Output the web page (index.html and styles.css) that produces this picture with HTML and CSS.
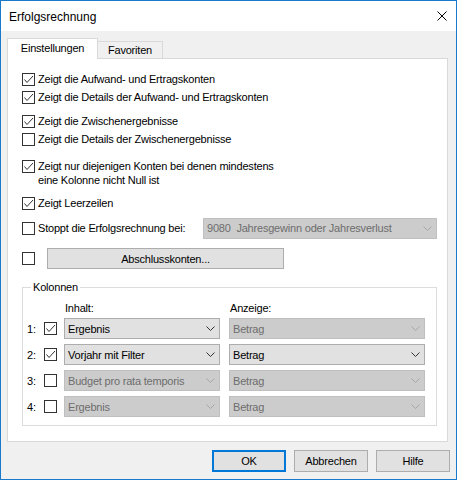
FILE: index.html
```html
<!DOCTYPE html>
<html lang="de">
<head>
<meta charset="utf-8">
<title>Erfolgsrechnung</title>
<link rel="stylesheet" href="styles.css">
</head>
<body>
<div class="window">
  <div class="titlebar">
    <span class="title">Erfolgsrechnung</span>
    <svg class="close" width="10" height="10" viewBox="0 0 10 10"><path d="M0.5 0.5 L9.5 9.5 M9.5 0.5 L0.5 9.5" stroke="#000" stroke-width="1" fill="none"/></svg>
  </div>
  <div class="body">
    <div class="tabs">
      <div class="tab active">Einstellungen</div>
      <div class="tab">Favoriten</div>
    </div>
    <div class="panel">
      <div class="options">
        <div class="row r1"><span class="cb checked"><svg width="11" height="11" viewBox="0 0 11 11"><polyline points="1.5,5.5 4,8.5 10,2" fill="none" stroke="#333" stroke-width="1"/></svg></span><span class="lbl">Zeigt die Aufwand- und Ertragskonten</span></div>
        <div class="row r2"><span class="cb checked"><svg width="11" height="11" viewBox="0 0 11 11"><polyline points="1.5,5.5 4,8.5 10,2" fill="none" stroke="#333" stroke-width="1"/></svg></span><span class="lbl">Zeigt die Details der Aufwand- und Ertragskonten</span></div>
        <div class="row r3"><span class="cb checked"><svg width="11" height="11" viewBox="0 0 11 11"><polyline points="1.5,5.5 4,8.5 10,2" fill="none" stroke="#333" stroke-width="1"/></svg></span><span class="lbl">Zeigt die Zwischenergebnisse</span></div>
        <div class="row r4"><span class="cb"></span><span class="lbl">Zeigt die Details der Zwischenergebnisse</span></div>
        <div class="row r5 multi"><span class="cb checked"><svg width="11" height="11" viewBox="0 0 11 11"><polyline points="1.5,5.5 4,8.5 10,2" fill="none" stroke="#333" stroke-width="1"/></svg></span><span class="lbl">Zeigt nur diejenigen Konten bei denen mindestens<br>eine Kolonne nicht Null ist</span></div>
        <div class="row r6"><span class="cb checked"><svg width="11" height="11" viewBox="0 0 11 11"><polyline points="1.5,5.5 4,8.5 10,2" fill="none" stroke="#333" stroke-width="1"/></svg></span><span class="lbl">Zeigt Leerzeilen</span></div>
        <div class="row r7 tall"><span class="cb"></span><span class="lbl">Stoppt die Erfolgsrechnung bei:</span>
          <div class="combo disabled stop"><span class="val">9080  Jahresgewinn oder Jahresverlust</span><svg width="9" height="5" viewBox="0 0 9 5"><polyline points="0.5,0.5 4.5,4.5 8.5,0.5" fill="none" stroke="#a6a6a6" stroke-width="1"/></svg></div>
        </div>
        <div class="row r8 tall"><span class="cb"></span><button class="btn wide">Abschlusskonten...</button></div>
      </div>
      <fieldset class="group">
        <legend>Kolonnen</legend>
        <div class="chead"><span class="h1">Inhalt:</span><span class="h2">Anzeige:</span></div>
        <div class="crow"><span class="num">1:</span><span class="cb checked"><svg width="11" height="11" viewBox="0 0 11 11"><polyline points="1.5,5.5 4,8.5 10,2" fill="none" stroke="#333" stroke-width="1"/></svg></span>
          <div class="combo c1"><span class="val">Ergebnis</span><svg width="9" height="5" viewBox="0 0 9 5"><polyline points="0.5,0.5 4.5,4.5 8.5,0.5" fill="none" stroke="#333" stroke-width="1"/></svg></div>
          <div class="combo c2 disabled"><span class="val">Betrag</span><svg width="9" height="5" viewBox="0 0 9 5"><polyline points="0.5,0.5 4.5,4.5 8.5,0.5" fill="none" stroke="#a6a6a6" stroke-width="1"/></svg></div>
        </div>
        <div class="crow"><span class="num">2:</span><span class="cb checked"><svg width="11" height="11" viewBox="0 0 11 11"><polyline points="1.5,5.5 4,8.5 10,2" fill="none" stroke="#333" stroke-width="1"/></svg></span>
          <div class="combo c1"><span class="val">Vorjahr mit Filter</span><svg width="9" height="5" viewBox="0 0 9 5"><polyline points="0.5,0.5 4.5,4.5 8.5,0.5" fill="none" stroke="#333" stroke-width="1"/></svg></div>
          <div class="combo c2"><span class="val">Betrag</span><svg width="9" height="5" viewBox="0 0 9 5"><polyline points="0.5,0.5 4.5,4.5 8.5,0.5" fill="none" stroke="#333" stroke-width="1"/></svg></div>
        </div>
        <div class="crow"><span class="num">3:</span><span class="cb"></span>
          <div class="combo c1 disabled"><span class="val">Budget pro rata temporis</span><svg width="9" height="5" viewBox="0 0 9 5"><polyline points="0.5,0.5 4.5,4.5 8.5,0.5" fill="none" stroke="#a6a6a6" stroke-width="1"/></svg></div>
          <div class="combo c2 disabled"><span class="val">Betrag</span><svg width="9" height="5" viewBox="0 0 9 5"><polyline points="0.5,0.5 4.5,4.5 8.5,0.5" fill="none" stroke="#a6a6a6" stroke-width="1"/></svg></div>
        </div>
        <div class="crow"><span class="num">4:</span><span class="cb"></span>
          <div class="combo c1 disabled"><span class="val">Ergebnis</span><svg width="9" height="5" viewBox="0 0 9 5"><polyline points="0.5,0.5 4.5,4.5 8.5,0.5" fill="none" stroke="#a6a6a6" stroke-width="1"/></svg></div>
          <div class="combo c2 disabled"><span class="val">Betrag</span><svg width="9" height="5" viewBox="0 0 9 5"><polyline points="0.5,0.5 4.5,4.5 8.5,0.5" fill="none" stroke="#a6a6a6" stroke-width="1"/></svg></div>
        </div>
      </fieldset>
    </div>
    <div class="buttons">
      <button class="btn dlg default">OK</button>
      <button class="btn dlg">Abbrechen</button>
      <button class="btn dlg">Hilfe</button>
    </div>
  </div>
</div>
</body>
</html>
```
FILE: styles.css
```css
* { box-sizing: border-box; }
html, body { margin: 0; padding: 0; background: #f0f0f0; }
body {
  font-family: "Liberation Sans", Arial, sans-serif;
  font-size: 11px;
  letter-spacing: -0.2px;
  color: #000;
}
.window {
  width: 457px;
  height: 480px;
  border: 1px solid #1979ca;
  background: #f0f0f0;
  display: flex;
  flex-direction: column;
}
.titlebar {
  height: 30px;
  background: #fff;
  display: flex;
  align-items: center;
  justify-content: space-between;
  padding: 0 9px 0 8px;
}
.title {
  font-size: 12px;
  letter-spacing: 0;
  line-height: 30px;
  padding-top: 1px;
}
.close { display: block; margin-top: -1px; }
.body {
  padding: 7px 6px 0 6px;
}
.tabs {
  display: flex;
  align-items: flex-end;
  height: 21px;
  margin-bottom: -1px;
  position: relative;
  z-index: 1;
}
.tab {
  height: 18px;
  border: 1px solid #d9d9d9;
  border-left: none;
  background: #f0f0f0;
  padding: 0;
  line-height: 16px;
  width: 65px;
  text-align: center;
}
.tab.active {
  height: 21px;
  width: 91px;
  border-left: 1px solid #d9d9d9;
  border-bottom: none;
  background: #fff;
  line-height: 19px;
}
.panel {
  width: 441px;
  height: 384px;
  border: 1px solid #d9d9d9;
  background: #fff;
}
.options {
  padding: 14px 10px 0 14px;
}
.row {
  display: flex;
  align-items: center;
  height: 13px;
  line-height: 13px;
}
.row.r2 { margin-top: 5px; }
.row.r3 { margin-top: 11px; }
.row.r4 { margin-top: 5px; }
.row.r5 { margin-top: 13px; height: 28px; align-items: flex-start; }
.row.r5 .cb { margin-top: 1px; }
.row.r5 .lbl { line-height: 14px; }
.row.r6 { margin-top: 10px; }
.row.r7 { margin-top: 8px; }
.row.r8 { margin-top: 9px; }
.row.tall { height: 21px; }
.cb {
  width: 13px;
  height: 13px;
  flex: 0 0 13px;
  border: 1px solid #333;
  background: #fff;
  display: block;
}
.cb svg { display: block; }
.lbl { margin-left: 3px; white-space: nowrap; }
.combo {
  height: 21px;
  border: 1px solid #adadad;
  background: #e1e1e1;
  display: flex;
  align-items: center;
  justify-content: space-between;
  padding: 0 4px 0 3px;
  white-space: pre;
}
.combo svg { display: block; flex: 0 0 auto; }
.combo.disabled {
  background: #cccccc;
  border-color: #bfbfbf;
  color: #6d6d6d;
}
.combo.stop { width: 234px; margin-left: auto; }
.btn {
  font-family: inherit;
  font-size: 11px;
  letter-spacing: -0.2px;
  color: #000;
  background: #e1e1e1;
  border: 1px solid #adadad;
  border-radius: 0;
  height: 21px;
  padding: 0;
  margin: 0;
}
.btn.wide { width: 237px; margin-left: 12px; }
.group {
  margin: 11px 0 0 14px;
  width: 415px;
  height: 146px;
  border: 1px solid #dcdcdc;
  padding: 0 0 0 4px;
}
.group legend {
  padding: 0 2px;
  margin-left: 4px;
  line-height: 14px;
}
.chead {
  display: flex;
  line-height: 14px;
  margin-top: 7px;
}
.chead .h1 { margin-left: 38px; width: 165px; }
.crow {
  display: flex;
  align-items: center;
  height: 21px;
  margin-top: 5px;
}
.chead + .crow { margin-top: 3px; }
.num { width: 17px; }
.combo.c1 { width: 156px; margin-left: 7px; }
.combo.c2 { width: 196px; margin-left: 9px; }
.buttons {
  display: flex;
  justify-content: flex-end;
  gap: 8px;
  padding-top: 8px;
}
.btn.dlg { width: 74px; height: 22px; }
.btn.default { border: 2px solid #0078d7; }
```
